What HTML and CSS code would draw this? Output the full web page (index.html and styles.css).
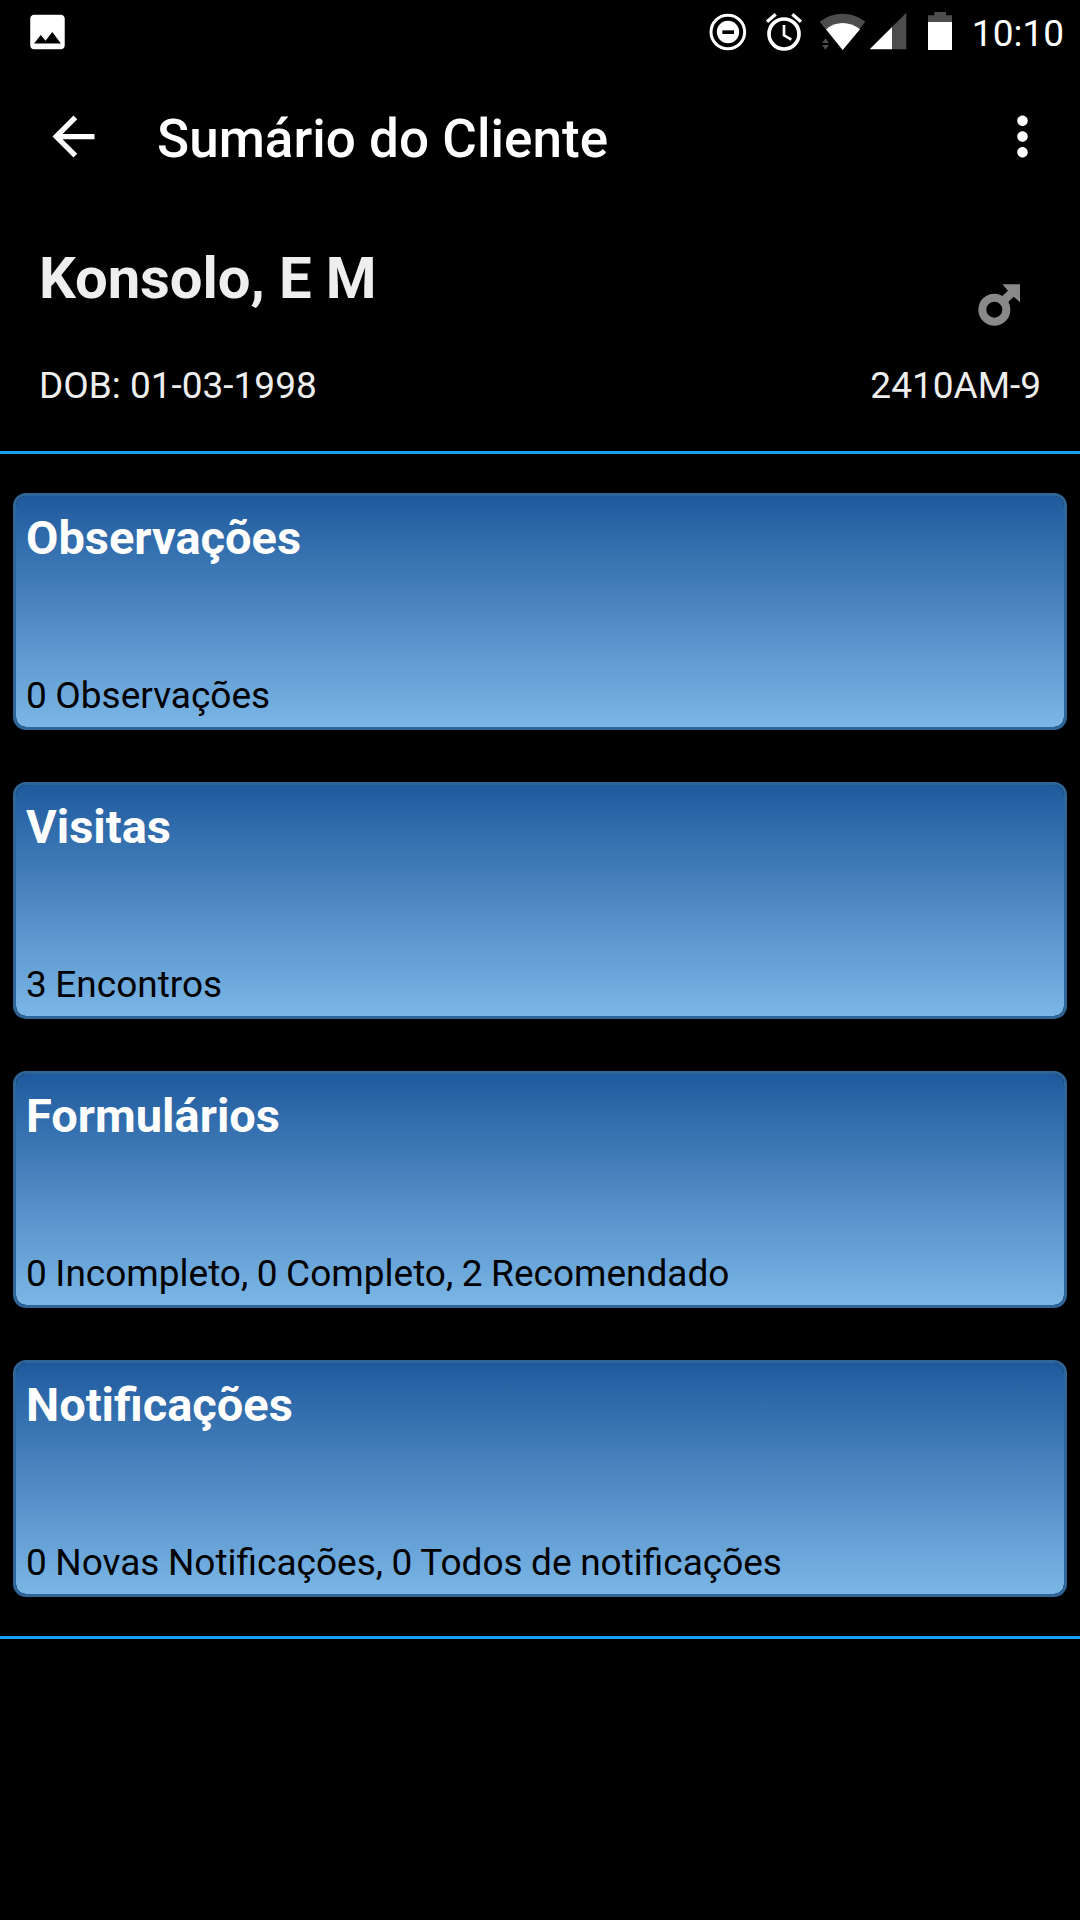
FILE: index.html
```html
<!DOCTYPE html>
<html lang="pt">
<head>
<meta charset="utf-8">
<title>Sumário do Cliente</title>
<link rel="stylesheet" href="styles.css">
</head>
<body>
<div class="status-bar">
  <svg class="status-photo" viewBox="-.25 0 24 24"><path fill="#fff" d="M21 19V5c0-1.1-.9-2-2-2H5c-1.1 0-2 .9-2 2v14c0 1.1.9 2 2 2h14c1.1 0 2-.9 2-2zM8.5 13.5l2.5 3.01L14.5 12l4.5 6H5l3.5-4.5z"/></svg>
  <div class="status-icons">
    <svg width="47" height="63" viewBox="54 0 141 189"><circle cx="113.5" cy="96" r="50.5" fill="none" stroke="#fff" stroke-width="9"/><circle cx="114" cy="96" r="33.5" fill="#fff"/><path d="M97 91h35v11H97z"/></svg>
    <svg width="60" height="63" viewBox="195 0 180 189" fill="none" stroke="#fff"><circle cx="282" cy="102" r="45" stroke-width="11"/><path stroke-width="8" d="M282 75v31l22 13"/><path stroke-width="10" d="M231 65l26-22M333 65l-26-22"/></svg>
    <svg width="52" height="63" viewBox="375 0 156 189"><path fill="#4d4d4d" d="M458 150L389 65Q420 41 458 41T526 65z"/><path fill="#fff" d="M458 150L408 88Q431 69 458 69T510 88z"/><path fill="#4d4d4d" d="M396 129h21l-10.5-14zM396 135h21l-10.5 14z"/></svg>
    <svg width="53" height="63" viewBox="531 0 159 189"><path fill="#4d4d4d" d="M606 81L649 38V148H606z"/><path fill="#fff" d="M539 148L606 81V148z"/></svg>
    <svg width="38" height="63" viewBox="690 0 114 189"><path fill="#4d4d4d" d="M714 66V46H733V36H768V46H786V66z"/><path fill="#fff" d="M714 66h72v84h-72z"/></svg>
  </div>
  <span class="clock">10:10</span>
</div>
<header class="app-bar">
  <svg class="icon" viewBox="0 0 24 24"><path fill="#fff" d="M20 11H7.83l5.59-5.59L12 4l-8 8 8 8 1.41-1.41L7.83 13H20v-2z"/></svg>
  <h1 class="app-title">Sumário do Cliente</h1>
  <svg class="icon" viewBox="0 0 24 24"><path fill="#fff" d="M12 8c1.1 0 2-.9 2-2s-.9-2-2-2-2 .9-2 2 .9 2 2 2zm0 2c-1.1 0-2 .9-2 2s.9 2 2 2 2-.9 2-2-.9-2-2-2zm0 6c-1.1 0-2 .9-2 2s.9 2 2 2 2-.9 2-2-.9-2-2-2z"/></svg>
</header>
<section class="client">
  <div class="client-head">
    <h2 class="client-name">Konsolo, E M</h2>
    <svg class="gender" viewBox="0 0 126 126"><circle cx="49" cy="77" r="36" fill="none" stroke="#898989" stroke-width="24"/><path fill="#898989" d="M73 1h53v54L107 38 87 58 69 40 90 20z"/></svg>
  </div>
  <div class="client-ids"><span>DOB: 01-03-1998</span><span>2410AM-9</span></div>
</section>
<main class="cards">
  <section class="card"><h3>Observações</h3><p>0 Observações</p></section>
  <section class="card"><h3>Visitas</h3><p>3 Encontros</p></section>
  <section class="card"><h3>Formulários</h3><p>0 Incompleto, 0 Completo, 2 Recomendado</p></section>
  <section class="card"><h3>Notificações</h3><p>0 Novas Notificações, 0 Todos de notificações</p></section>
</main>
</body>
</html>
```
FILE: styles.css
```css
* { box-sizing: border-box; }
body { margin: 0; width: 1080px; height: 1920px; overflow: hidden; background: #000; color: #eee; font-family: Roboto, sans-serif; font-size: 37px; line-height: 43px; }
h1, h2, h3, p { margin: 0; }
svg { display: block; flex: none; }

.status-bar { height: 63px; display: flex; align-items: center; padding: 0 16px 0 24px; color: #fff; }
.status-photo { width: 46px; height: 46px; }
.status-icons { display: flex; margin-left: auto; }
.clock { width: 106px; text-align: right; padding-top: 3px; }

.app-bar { height: 147px; display: flex; align-items: center; padding: 0 26px 0 42px; }
.icon { width: 63px; height: 63px; }
.app-title { flex: 1; margin-left: 52px; padding-top: 4px; color: #fff; font-size: 53px; line-height: 62px; font-weight: 500; letter-spacing: 0.04px; }

.client { height: 244px; border-bottom: 3px solid #17a1f3; padding: 34px 39px 0; }
.client-head, .client-ids { display: flex; justify-content: space-between; align-items: flex-start; }
.client-head { height: 68px; }
.client-name { font-size: 58px; line-height: 68px; font-weight: 700; letter-spacing: -0.08px; }
.gender { width: 42px; height: 42px; margin: 40px 21px 0 0; }
.client-ids { margin-top: 52px; }

.cards { display: grid; gap: 52px; padding: 39px 13px; border-bottom: 3px solid #17a1f3; }
.card { height: 237px; border: 3px solid #2f6699; border-radius: 13px; padding: 14px 10px 10px; display: flex; flex-direction: column; justify-content: space-between; background: linear-gradient(#1f5a9e, #7bb6e7) padding-box; color: #000; }
.card h3 { color: #fff; font-size: 47px; line-height: 55px; font-weight: 700; }
.card p { word-spacing: -0.65px; }
```
